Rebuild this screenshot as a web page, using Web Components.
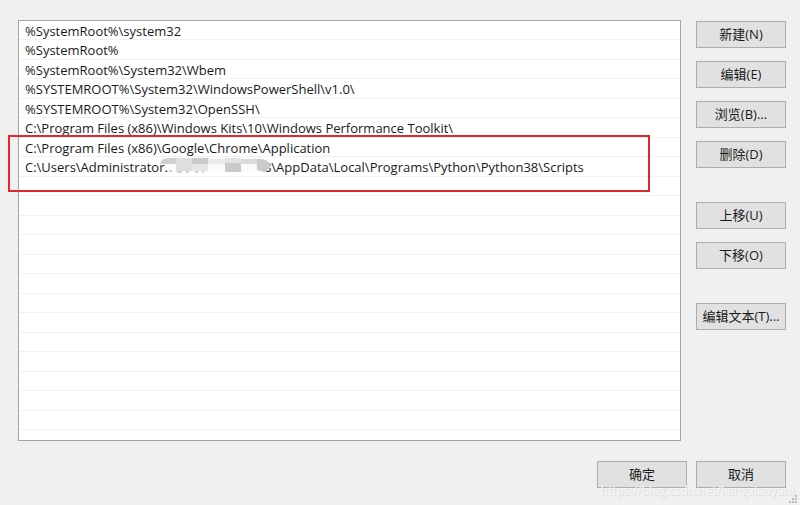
<!DOCTYPE html>
<html lang="zh-CN">
<head>
  <meta charset="utf-8">
  <title>编辑环境变量</title>
  <style>
    body {
      margin: 0;
      background: #f0f0f0;
      color: #1a1a1a;
      font: 13px/16px "Open Sans", "Noto Sans CJK SC", sans-serif;
    }
  </style>
</head>
<body>
  <env-dialog>
    <path-list slot="list">
      <path-row>%SystemRoot%\system32</path-row>
      <path-row>%SystemRoot%</path-row>
      <path-row>%SystemRoot%\System32\Wbem</path-row>
      <path-row>%SYSTEMROOT%\System32\WindowsPowerShell\v1.0\</path-row>
      <path-row>%SYSTEMROOT%\System32\OpenSSH\</path-row>
      <path-row>C:\Program Files (x86)\Windows Kits\10\Windows Performance Toolkit\</path-row>
      <path-row>C:\Program Files (x86)\Google\Chrome\Application</path-row>
      <path-row>C:\Users\Administrator.<mosaic-mask></mosaic-mask>8\AppData\Local\Programs\Python\Python38\Scripts</path-row>
    </path-list>
    <dialog-button slot="edit">新建(N)</dialog-button>
    <dialog-button slot="edit">编辑(E)</dialog-button>
    <dialog-button slot="edit">浏览(B)...</dialog-button>
    <dialog-button slot="edit">删除(D)</dialog-button>
    <dialog-button slot="move">上移(U)</dialog-button>
    <dialog-button slot="move">下移(O)</dialog-button>
    <dialog-button slot="text">编辑文本(T)...</dialog-button>
    <dialog-button slot="footer">确定</dialog-button>
    <dialog-button slot="footer">取消</dialog-button>
    <water-mark slot="mark">https://blog.csdn.net/kangxiaoyanl</water-mark>
  </env-dialog>

  <script>
    // Общая основа: открытый shadow root с разметкой из статического поля
    class BaseElement extends HTMLElement {
      constructor() {
        super();
        this.attachShadow({ mode: 'open' });
        this.shadowRoot.innerHTML = this.constructor.template;
      }
    }

    class EnvDialog extends BaseElement {
      static template = `
        <style>
          :host {
            display: flex;
            flex-direction: column;
            box-sizing: border-box;
            min-height: 100vh;
            padding: 20px 14px 17px 18px;
            gap: 20px;
            position: relative;
          }
          main {
            flex: 1;
            display: flex;
            gap: 15px;
          }
          aside {
            width: 90px;
            padding-top: 1px;
            display: flex;
            flex-direction: column;
            gap: 34px;
          }
          .group {
            display: grid;
            gap: 13px;
          }
          footer {
            display: flex;
            justify-content: flex-end;
            gap: 9px;
          }
          svg {
            position: absolute;
            right: 2px;
            bottom: 1px;
          }
        </style>
        <main>
          <slot name="list"></slot>
          <aside>
            <div class="group"><slot name="edit"></slot></div>
            <div class="group"><slot name="move"></slot></div>
            <div class="group"><slot name="text"></slot></div>
          </aside>
        </main>
        <footer><slot name="footer"></slot></footer>
        <slot name="mark"></slot>
        <svg width="10" height="10" fill="#b8b8b8" aria-hidden="true">
          <path d="M7 1h2v2h-2zM4 4h2v2h-2zM7 4h2v2h-2zM1 7h2v2h-2zM4 7h2v2h-2zM7 7h2v2h-2z"/>
        </svg>
      `;
    }

    class PathList extends BaseElement {
      static template = `
        <style>
          :host {
            flex: 1;
            min-width: 0;
            display: grid;
            grid-template-rows: repeat(21, 1fr);
            box-sizing: border-box;
            padding-bottom: 10px;
            border: 1px solid #a0a3a8;
            background: #fff;
            position: relative;
          }
          /* красная рамка поверх списка */
          .mark {
            position: absolute;
            left: -11px;
            right: 30px;
            top: 114px;
            height: 57px;
            box-sizing: border-box;
            border: 2px solid #e0282e;
            pointer-events: none;
          }
        </style>
        <slot></slot>
        <div class="mark"></div>
      `;

      connectedCallback() {
        // добиваем список пустыми строками
        while (this.children.length < 21) {
          this.append(document.createElement('path-row'));
        }
      }
    }

    class PathRow extends BaseElement {
      static template = `
        <style>
          :host {
            display: block;
            padding: 2px 0 0 6px;
            min-height: 16px;
            border-bottom: 1px solid #f1f1f1;
            white-space: nowrap;
          }
        </style>
        <slot></slot>
      `;
    }

    // Замазанный кусок пути
    class MosaicMask extends BaseElement {
      static template = `
        <style>
          :host {
            display: inline-block;
            width: 110px;
            height: 16px;
            margin: 0 -6px 0 -8px;
            vertical-align: top;
            position: relative;
          }
          svg {
            display: block;
            position: absolute;
            top: -2px;
          }
        </style>
        <svg width="110" height="17" aria-hidden="true">
          <path d="M0 7Q1 1 8 1H98Q108 1 110 8Q110 14 104 15H8V7H0z" fill="#fafafa"/>
          <path d="M0 7Q1 1 8 1H16V7z" fill="#d0d0d0"/>
          <path d="M16 1h16v13h-16z" fill="#dedede"/>
          <path d="M32 1h16v6h-16z" fill="#cacacc"/>
          <path d="M32 7h16v7h-16z" fill="#e6e6e6"/>
          <path d="M48 2h17v5h-17z" fill="#ebebe8"/>
          <path d="M65 1h16v5h-16z" fill="#e3e3df"/>
          <path d="M65 6h16v9h-16z" fill="#cacaca"/>
          <path d="M81 2h16v5h-16z" fill="#dadada"/>
          <path d="M97 2Q108 1 110 8Q109 15 104 15L97 13z" fill="#cbcbcd"/>
          <path d="M9 14h3M17 15h5M26 15h3M35 15h3M42 15h2" stroke="#a8a8a8"/>
        </svg>
      `;
    }

    class DialogButton extends BaseElement {
      static template = `
        <style>
          :host {
            display: block;
            width: 90px;
          }
          button {
            display: block;
            width: 100%;
            height: 27px;
            padding: 0 0 1px;
            border: 1px solid #adadad;
            background: #e1e1e1;
            color: inherit;
            font: inherit;
            white-space: nowrap;
          }
          button:hover {
            border-color: #0078d7;
            background: #e5f1fb;
          }
        </style>
        <button type="button"><slot></slot></button>
      `;
    }

    class WaterMark extends BaseElement {
      static template = `
        <style>
          :host {
            position: absolute;
            right: 6px;
            bottom: 6px;
            font-size: 12px;
            color: #f6f6f6;
            text-shadow: 1px 1px 1px #d8d8d8;
            pointer-events: none;
          }
        </style>
        <slot></slot>
      `;
    }

    customElements.define('env-dialog', EnvDialog);
    customElements.define('path-row', PathRow);
    customElements.define('path-list', PathList);
    customElements.define('mosaic-mask', MosaicMask);
    customElements.define('dialog-button', DialogButton);
    customElements.define('water-mark', WaterMark);
  </script>
</body>
</html>
